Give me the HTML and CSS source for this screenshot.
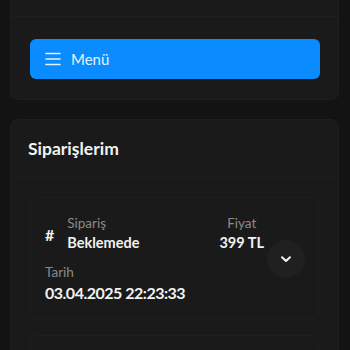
FILE: index.html
```html
<!DOCTYPE html>
<html lang="tr">
<head>
<meta charset="utf-8">
<link rel="stylesheet" href="styles.css">
</head>
<body>
<div class="page">
  <section class="card top-card">
    <div class="top-head"></div>
    <div class="top-body">
      <button class="menu-btn">
        <svg class="menu-icon" width="16" height="16" viewBox="0 0 16 16"><path d="M1 2.5h14M1 8h14M1 13.5h14" stroke="#e6f1ff" stroke-width="1.6" stroke-linecap="round" fill="none"/></svg>
        <span>Menü</span>
      </button>
    </div>
  </section>
  <section class="card orders-card">
    <div class="orders-head"><h2>Siparişlerim</h2></div>
    <div class="orders-body">
      <div class="order">
        <div class="order-info">
          <div class="order-row">
            <div class="order-id">
              <span class="hash">#</span>
              <div class="field">
                <span class="label">Sipariş</span>
                <span class="value">Beklemede</span>
              </div>
            </div>
            <div class="field price">
              <span class="label">Fiyat</span>
              <span class="value">399 TL</span>
            </div>
          </div>
          <div class="field date">
            <span class="label">Tarih</span>
            <span class="value big">03.04.2025 22:23:33</span>
          </div>
        </div>
        <button class="toggle">
          <svg width="14" height="14" viewBox="0 0 14 14"><path d="M3 5.2l4 3.8 4-3.8" stroke="#f2f2f2" stroke-width="2" stroke-linecap="round" stroke-linejoin="round" fill="none"/></svg>
        </button>
      </div>
      <div class="order ghost"></div>
    </div>
  </section>
</div>
</body>
</html>
```
FILE: styles.css
```css
* { box-sizing: border-box; }
html, body { margin: 0; padding: 0; background: #131313; }
body {
  font-family: Lato, "Noto Sans", sans-serif;
  color: #f2f2f2;
  height: 350px;
  overflow: hidden;
}
.page {
  padding: 0 11px 0 10px;
  display: flex;
  flex-direction: column;
  gap: 19px;
}
.card {
  background: #1a1a1a;
  border: 1px solid #1e1e1e;
  border-radius: 8px;
}
.top-card { border-top-left-radius: 0; border-top-right-radius: 0; border-top: none; }
.top-head { height: 17px; border-bottom: 1px solid #202020; }
.top-body { padding: 22px 18px 20px 19px; }
.menu-btn {
  width: 100%;
  height: 40px;
  border: none;
  border-radius: 6px;
  background: #0a8cff;
  display: flex;
  align-items: center;
  gap: 10px;
  padding: 0 0 0 15px;
  font-family: inherit;
  font-size: 15px;
  color: #e6f1ff;
  cursor: pointer;
}
.menu-icon { display: block; }
.orders-card { border-bottom: none; border-bottom-left-radius: 0; border-bottom-right-radius: 0; height: 240px; }
.orders-head { padding: 18px 17px 17px; border-bottom: 1px solid #1d1d1d; }
.orders-head h2 { margin: 0; font-size: 17.5px; font-weight: 700; line-height: 21px; }
.orders-body { padding: 20px 19px 0 19px; display: flex; flex-direction: column; gap: 16px; }
.order {
  background: #1a1a1a;
  border: 1px solid #1f1f1f;
  border-radius: 6px;
  display: flex;
  align-items: center;
  padding: 17px 13px 16px 14px;
}
.order.ghost { height: 40px; }
.order-info { flex: 1; display: flex; flex-direction: column; gap: 13px; }
.order-row { display: flex; justify-content: space-between; align-items: flex-start; }
.order-id { display: flex; align-items: center; gap: 13px; }
.hash { font-size: 16px; font-weight: 700; padding-top: 2px; }
.field { display: flex; flex-direction: column; gap: 3px; }
.price { align-items: center; margin-right: -1px; }
.label { font-size: 13.5px; color: #8a8a8a; line-height: 16px; }
.value { font-size: 14.5px; font-weight: 700; line-height: 17px; }
.value.big { font-size: 16px; line-height: 19px; letter-spacing: -0.5px; }
.toggle {
  width: 38px;
  height: 38px;
  border-radius: 50%;
  border: none;
  background: #202020;
  display: flex;
  align-items: center;
  justify-content: center;
  margin-left: 4px;
  padding: 0;
}
```
